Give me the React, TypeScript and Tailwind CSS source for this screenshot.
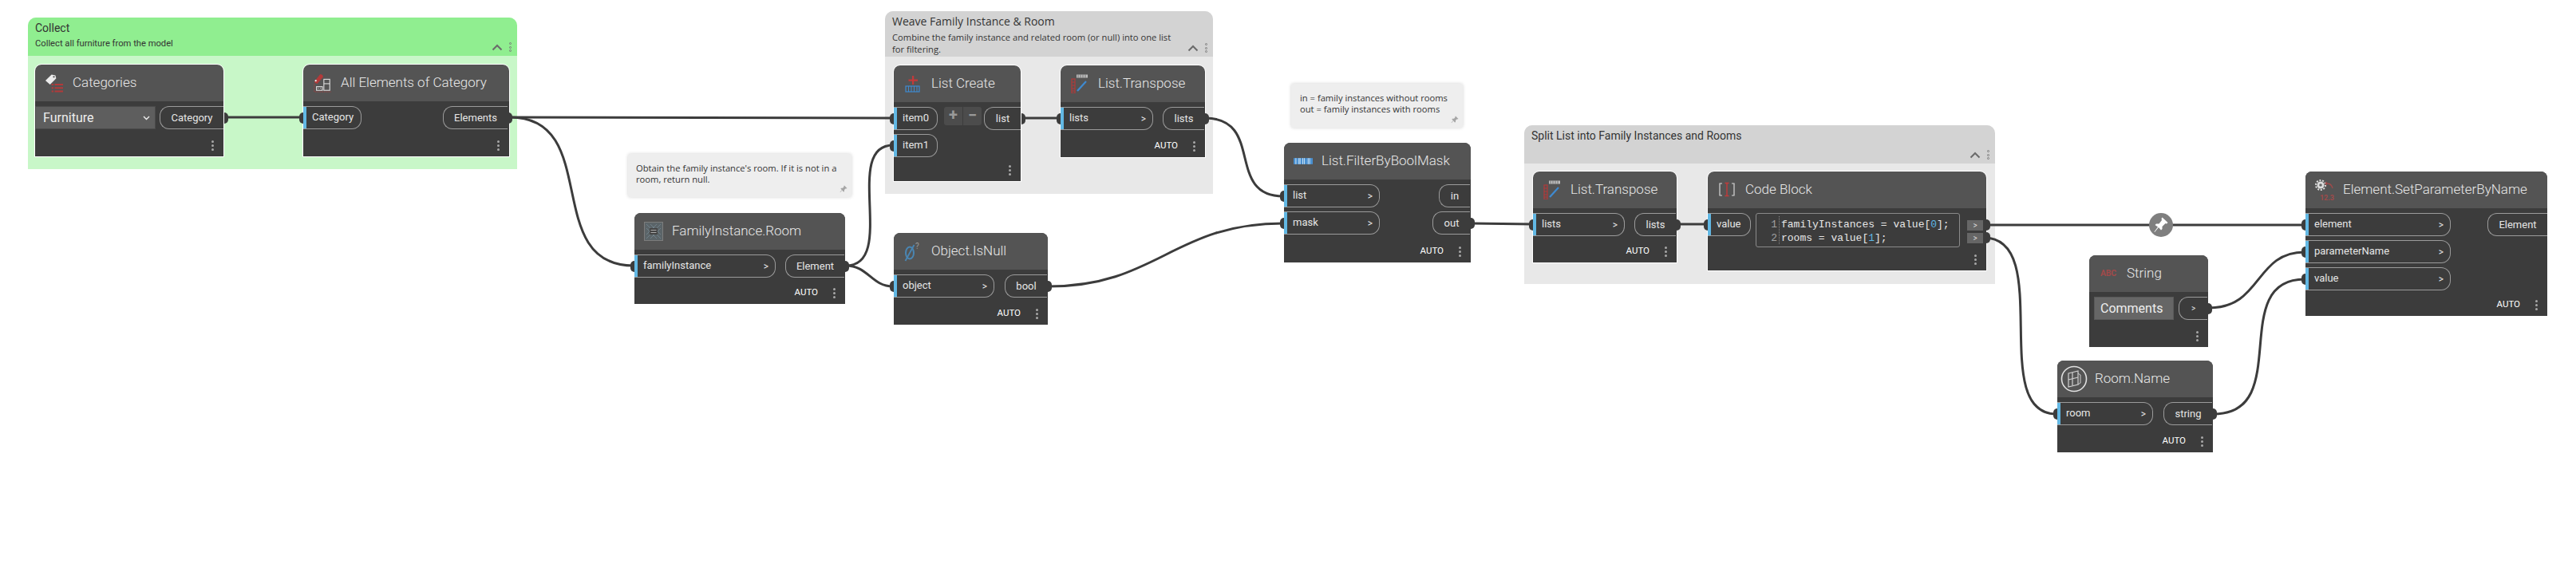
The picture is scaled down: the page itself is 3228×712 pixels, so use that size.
import React from 'react';

type Port = { label: string; cls: string; arrow?: boolean; wired?: boolean };

const Dots = () => (
  <div className="flex flex-col gap-[2px]">
    <span className="w-[3px] h-[3px] rounded-full bg-[#a8a8a8]" />
    <span className="w-[3px] h-[3px] rounded-full bg-[#a8a8a8]" />
    <span className="w-[3px] h-[3px] rounded-full bg-[#a8a8a8]" />
  </div>
);

const InPort = ({ label, cls, arrow = true, wired = true }: Port) => (
  <div className={`relative flex items-center justify-between h-[29px] border border-l-0 border-[#9b9b9b] rounded-r-[12px] pl-[10px] pr-[8px] shadow-[inset_4px_0_0_#62b8e4] ${cls}`}>
    {wired && <span className="absolute left-[-5px] top-[7px] w-[5px] h-[14px] rounded-l-full bg-[#3c3c3c]" />}
    <span className="pl-[1px] mt-[-2px]">{label}</span>
    {arrow && <span className="text-[12px]">&gt;</span>}
  </div>
);

const OutPort = ({ label, cls, wired = true }: Port) => (
  <div className={`relative flex items-center justify-center h-[29px] border border-r-0 border-[#9b9b9b] rounded-l-[12px] ${cls}`}>
    <span>{label}</span>
    {wired && <span className="absolute right-[-6px] top-[7px] w-[5px] h-[14px] rounded-r-full bg-[#3c3c3c]" />}
  </div>
);

interface NodeProps {
  box: string;
  title: string;
  icon: React.ReactNode;
  auto?: boolean;
  outline?: boolean;
  children: React.ReactNode;
}

const Node = ({ box, title, icon, auto, outline, children }: NodeProps) => (
  <div className={`absolute flex flex-col bg-[#3c3c3c] rounded-t-[8px] font-['Roboto',sans-serif] text-[13px] text-[#e6e6e6] ${outline ? 'outline outline-1 outline-white' : ''} ${box}`}>
    <div className="flex items-center h-[46px] shrink-0 bg-[#545454] rounded-t-[8px] pl-[12px]">
      <div className="flex items-center justify-center w-[24px] h-[26px] mr-[11px]">{icon}</div>
      <span className="text-[17px] font-light text-[#e8e8e8] whitespace-nowrap">{title}</span>
    </div>
    <div className="pt-[6px]">{children}</div>
    <div className="mt-auto flex items-center justify-end h-[28px] pr-[12px] gap-[19px]">
      {auto && <span className="text-[11.5px] text-white">AUTO</span>}
      <Dots />
    </div>
  </div>
);

const Group = ({ box, head, body, title, desc, titleCls }: { box: string; head: string; body: string; title: string; desc?: string; titleCls: string }) => (
  <div className={`absolute flex flex-col rounded-t-[10px] font-['Open_Sans',sans-serif] text-[#333] ${body} ${box}`}>
    <div className={`relative h-[48px] shrink-0 rounded-t-[10px] px-[9px] pt-[3px] ${head} ${titleCls}`}>
      <div className="text-[14px] leading-[20px] whitespace-nowrap">{title}</div>
      {desc && <div className="text-[11.2px] leading-[15px] mt-[2px] w-[360px]">{desc}</div>}
      <svg className="absolute right-[18px] bottom-[6px] w-[14px] h-[9px]" viewBox="0 0 14 9">
        <path d="M1.5 7.5 7 2l5.5 5.5" fill="none" stroke="#6b6b6b" strokeWidth="2" />
      </svg>
      <div className="absolute right-[7px] bottom-[5px] flex flex-col gap-[1.5px]">
        <span className="w-[3px] h-[3px] rounded-full border border-[#777]" />
        <span className="w-[3px] h-[3px] rounded-full border border-[#777]" />
        <span className="w-[3px] h-[3px] rounded-full border border-[#777]" />
      </div>
    </div>
  </div>
);

const Note = ({ box, lines }: { box: string; lines: string[] }) => (
  <div className={`absolute bg-[#eeeeee] rounded-[3px] shadow-[0_0_4px_rgba(0,0,0,0.18)] font-['Open_Sans',sans-serif] text-[11.2px] leading-[14px] text-[#333] whitespace-nowrap ${box}`}>
    {lines.map((l) => (
      <div key={l}>{l}</div>
    ))}
    <svg className="absolute right-[5px] bottom-[5px] w-[10px] h-[10px]" viewBox="0 0 10 10">
      <path d="M6 0.5 9.5 4 8.6 4.6 7.8 4.2 6 6 6 8 5 8.4 3.4 6.6 1 9 0.6 8.6 3 6.2 1.4 4.6 2 3.8 4 3.8 5.6 2 5.4 1.2Z" fill="#a5a5a5" />
    </svg>
  </div>
);

// icons
const IconCategories = () => (
  <svg width="25" height="24" viewBox="0 0 25 24">
    <path d="M1 9 9 1l5 1 1 4-8 8Z" fill="#ececec" />
    <circle cx="12" cy="4" r="1.2" fill="#555" />
    <path d="M13 13h11v2H13Zm0 4.500h11v2H13Zm0 4.500h11v2H13Z" fill="#b23a3a" />
    <path d="M9 13h2.500v2H9Zm0 4.500h2.500v2H9Zm0 4.500h2.500v2H9Z" fill="#b23a3a" />
  </svg>
);

const IconAllElements = () => (
  <svg width="26" height="26" viewBox="0 0 26 26">
    <path d="M2 11 10 1l3 1 1 3-8 9-3-1Z" fill="#b23a3a" />
    <circle cx="4" cy="10" r="1.2" fill="#eee" />
    <path d="M2 14v11h23" fill="none" stroke="#b23a3a" strokeWidth="0.8" strokeDasharray="2 1" />
    <rect x="15" y="8" width="8" height="15" fill="none" stroke="#ddd" strokeWidth="1.2" />
    <path d="M15 14h8" stroke="#ddd" strokeWidth="1.2" />
    <rect x="5" y="18" width="8" height="5" fill="none" stroke="#ddd" strokeWidth="1.2" />
    <path d="M7 20h1m2 0h1" stroke="#ddd" strokeWidth="1.2" />
  </svg>
);

const IconFamilyRoom = () => (
  <svg width="24" height="24" viewBox="0 0 24 24">
    <rect x="0.500" y="0.500" width="23" height="23" fill="#5b6468" stroke="#7c7c7c" />
    <path d="M3 3 21 21M21 3 3 21M3 8l13 13M8 3l13 13M21 8 8 21M16 3 3 16" stroke="#6f7f88" strokeWidth="1" />
    <rect x="7" y="8" width="10" height="8" fill="#444" />
    <path d="M8.500 10.500h7M8.500 13.500h7" stroke="#aaa" strokeWidth="1" />
  </svg>
);

const IconIsNull = () => (
  <svg width="24" height="26" viewBox="0 0 24 26">
    <ellipse cx="8" cy="15" rx="5" ry="7.500" fill="none" stroke="#4a86b3" strokeWidth="2" />
    <path d="M2.500 25 13.500 5" stroke="#4a86b3" strokeWidth="1.800" />
    <text x="15" y="10" fontSize="10" fill="#9b9b9b" fontFamily="Roboto, sans-serif">?</text>
  </svg>
);

const IconListCreate = () => (
  <svg width="20" height="22" viewBox="0 0 20 22">
    <path d="M9 1h2.200v4.500H16v2.200h-4.800V12H9V7.700H4.500V5.500H9Z" fill="#c23a3a" />
    <rect x="1" y="14" width="17" height="7" fill="none" stroke="#3f8ad0" strokeWidth="1.200" />
    <path d="M4.500 14v7M8 14v7M11.500 14v7M15 14v7" stroke="#3f8ad0" strokeWidth="1" />
  </svg>
);

const IconTranspose = () => (
  <svg width="22" height="24" viewBox="0 0 22 24">
    <rect x="7" y="0.500" width="14" height="4" fill="#bdbdbd" />
    <path d="M9 0.500v4M12 0.500v4M15 0.500v4M18 0.500v4" stroke="#666" strokeWidth="0.800" />
    <rect x="1" y="6" width="4" height="18" fill="none" stroke="#b33a3a" strokeWidth="1.200" />
    <path d="M1 10h4M1 14h4M1 18h4M1 21h4" stroke="#b33a3a" strokeWidth="1" />
    <path d="M8 21 19 9" stroke="#3f8ad0" strokeWidth="2.200" />
  </svg>
);

const IconFilter = () => (
  <svg width="25" height="8" viewBox="0 0 25 8">
    <rect x="0" y="0" width="25" height="8" fill="#4a90d0" />
    <path d="M3 0v8M7 0v8M8.500 0v8M12 0v8M14 0v8M19 0v8M21 0v8" stroke="#cfe4f5" strokeWidth="1" />
  </svg>
);

const IconCode = () => (
  <svg width="22" height="20" viewBox="0 0 22 20">
    <path d="M5 2H2v15h3M17 2h3v15h-3" fill="none" stroke="#d8d8d8" strokeWidth="1.200" />
    <path d="M8.500 1.500h5M8.500 17.500h5M11 1.500v16" fill="none" stroke="#c23a3a" strokeWidth="1.400" />
  </svg>
);

const IconString = () => (
  <span className="text-[10.5px] font-bold text-[#a04a4a] tracking-[-0.2px]">ABC</span>
);

const IconRoom = () => (
  <svg width="34" height="34" viewBox="0 0 34 34" className="ml-[-6px] shrink-0">
    <circle cx="17" cy="17" r="15.500" fill="none" stroke="#e0e0e0" strokeWidth="1.600" />
    <path d="M10 10 22 7v17l-12 3Zm0 8 12-3M15 9v16" fill="none" stroke="#d0d0d0" strokeWidth="1.200" />
    <path d="M22 10l3 2v10l-3 2" fill="none" stroke="#d0d0d0" strokeWidth="1" />
  </svg>
);

const IconSetParam = () => (
  <div className="relative w-[24px] h-[26px]">
    <svg className="absolute left-0 top-0" width="24" height="18" viewBox="0 0 24 18">
      <circle cx="7" cy="7" r="4.500" fill="#ddd" />
      <circle cx="7" cy="7" r="6" fill="none" stroke="#ddd" strokeWidth="2" strokeDasharray="2 1.700" />
      <circle cx="7" cy="7" r="1.800" fill="#666" />
      <path d="M15 5c4 0 6 2 7 6" fill="none" stroke="#a04a4a" strokeWidth="1.300" />
      <path d="M15 2.500v5l-3-2.500Z" fill="#a04a4a" />
    </svg>
    <span className="absolute right-0 bottom-[-2px] text-[9px] leading-[10px] text-[#a04a4a] font-bold">12.3</span>
  </div>
);

const Wires = () => (
  <svg className="absolute left-0 top-0" width="3228" height="712" fill="none" stroke="#3c3c3c" strokeWidth="3">
    <path d="M281 147H379" />
    <path d="M639 147C860 147 900 148 1119 148" />
    <path d="M639 147C755 147 678 333 794 333" />
    <path d="M1060 333C1125 333 1055 182 1119 182" />
    <path d="M1060 333C1088 333 1092 359 1119 359" />
    <path d="M1280 148H1328" />
    <path d="M1510 148C1585 148 1535 246 1608 246" />
    <path d="M1314 359C1450 359 1470 280 1608 280" />
    <path d="M1844 280C1880 280 1885 281 1920 281" />
    <path d="M2102 281H2139" />
    <path d="M2486 282C2600 282 2780 282 2888 282" />
    <path d="M2486 298C2575 298 2490 519 2577 519" />
    <path d="M2768 386C2835 386 2825 316 2888 316" />
    <path d="M2774 519C2875 519 2790 350 2888 350" />
  </svg>
);

export default function App() {
  return (
    <div className="relative w-[3228px] h-[712px] bg-white overflow-hidden">
      <Group box="left-[35px] top-[22px] w-[613px] h-[190px]" head="bg-[#90ee90]" body="bg-[#c8f7c8]" titleCls="font-['Roboto',sans-serif]" title="Collect" desc="Collect all furniture from the model" />
      <Group box="left-[1109px] top-[14px] w-[411px] h-[229px]" head="bg-[#d3d3d3]" body="bg-[#e8e8e8]" titleCls="!h-[57px]" title="Weave Family Instance & Room" desc="Combine the family instance and related room (or null) into one list for filtering." />
      <Group box="left-[1910px] top-[157px] w-[590px] h-[199px]" head="bg-[#d3d3d3]" body="bg-[#e8e8e8]" titleCls="font-['Roboto',sans-serif]" title="Split List into Family Instances and Rooms" />

      <Wires />

      <Note box="left-[787px] top-[193px] w-[280px] h-[54px] pl-[10px] pt-[11px]" lines={["Obtain the family instance's room. If it is not in a", 'room, return null.']} />
      <Note box="left-[1618px] top-[105px] w-[215px] h-[55px] pl-[11px] pt-[11px]" lines={['in = family instances without rooms', 'out = family instances with rooms']} />

      <Node box="left-[44px] top-[81px] w-[236px] h-[115px]" outline title="Categories" icon={<IconCategories />}>
        <div className="flex items-center">
          <div className="flex items-center justify-between w-[151px] h-[29px] bg-[#5e5e5e] border border-[#4a4a4a] pl-[9px] pr-[6px] text-[16px] text-[#eee]">
            <span>Furniture</span>
            <svg className="w-[9px] h-[6px]" viewBox="0 0 9 6">
              <path d="M1 1l3.500 3.500L8 1" fill="none" stroke="#eee" strokeWidth="1.400" />
            </svg>
          </div>
          <OutPort label="Category" cls="ml-[5px] w-[80px]" />
        </div>
      </Node>

      <Node box="left-[380px] top-[81px] w-[258px] h-[115px]" outline title="All Elements of Category" icon={<IconAllElements />}>
        <div className="flex justify-between">
          <InPort label="Category" arrow={false} cls="w-[73px]" />
          <OutPort label="Elements" cls="w-[81px] mr-[2px]" />
        </div>
      </Node>

      <Node box="left-[795px] top-[267px] w-[264px] h-[114px]" auto title="FamilyInstance.Room" icon={<IconFamilyRoom />}>
        <div className="flex justify-between">
          <InPort label="familyInstance" cls="w-[177px]" />
          <OutPort label="Element" cls="w-[74px] mr-[1px]" />
        </div>
      </Node>

      <Node box="left-[1120px] top-[292px] w-[193px] h-[115px]" auto title="Object.IsNull" icon={<IconIsNull />}>
        <div className="flex justify-between">
          <InPort label="object" cls="w-[126px]" />
          <OutPort label="bool" cls="w-[53px] mr-[1px]" />
        </div>
      </Node>

      <Node box="left-[1120px] top-[82px] w-[159px] h-[145px]" outline title="List Create" icon={<IconListCreate />}>
        <div className="flex justify-between">
          <div className="flex flex-col gap-[5px]">
            <InPort label="item0" arrow={false} cls="w-[55px]" />
            <InPort label="item1" arrow={false} cls="w-[55px]" />
          </div>
          <div className="flex h-[23px] w-[47px] ml-[5px] bg-[#4c4c4c] rounded-[3px] text-[#999] text-[20px] font-bold leading-[21px]">
            <span className="flex-1 text-center border-r border-[#3c3c3c]">+</span>
            <span className="flex-1 text-center">−</span>
          </div>
          <OutPort label="list" cls="w-[46px]" />
        </div>
      </Node>

      <Node box="left-[1329px] top-[82px] w-[181px] h-[115px]" outline auto title="List.Transpose" icon={<IconTranspose />}>
        <div className="flex justify-between">
          <InPort label="lists" cls="w-[116px]" />
          <OutPort label="lists" cls="w-[52px] mr-[1px]" />
        </div>
      </Node>

      <Node box="left-[1609px] top-[179px] w-[234px] h-[150px]" auto title="List.FilterByBoolMask" icon={<IconFilter />}>
        <div className="flex justify-between">
          <div className="flex flex-col gap-[5px]">
            <InPort label="list" cls="w-[120px]" />
            <InPort label="mask" cls="w-[120px]" />
          </div>
          <div className="flex flex-col items-end gap-[5px] mr-[1px]">
            <OutPort label="in" wired={false} cls="w-[39px]" />
            <OutPort label="out" cls="w-[47px]" />
          </div>
        </div>
      </Node>

      <Node box="left-[1921px] top-[215px] w-[180px] h-[114px]" outline auto title="List.Transpose" icon={<IconTranspose />}>
        <div className="flex justify-between">
          <InPort label="lists" cls="w-[115px]" />
          <OutPort label="lists" cls="w-[52px] mr-[1px]" />
        </div>
      </Node>

      <Node box="left-[2140px] top-[215px] w-[349px] h-[124px]" outline title="Code Block" icon={<IconCode />}>
        <div className="flex items-start">
          <InPort label="value" arrow={false} cls="w-[54px]" />
          <div className="relative ml-[6px] w-[256px] h-[43px] border border-[#8a8a8a] rounded-[3px] font-['Liberation_Mono',monospace] text-[13px] leading-[17px] pt-[5px]">
            <div className="absolute left-[28px] top-[3px] bottom-[3px] border-l border-dotted border-[#888]" />
            <div className="flex whitespace-pre">
              <span className="w-[26px] text-right text-[#a0a0a0]">1</span>
              <span className="ml-[5px]">familyInstances = value[<span className="text-[#5cb8e6]">0</span>];</span>
            </div>
            <div className="flex whitespace-pre">
              <span className="w-[26px] text-right text-[#a0a0a0]">2</span>
              <span className="ml-[5px]">rooms = value[<span className="text-[#5cb8e6]">1</span>];</span>
            </div>
          </div>
          <div className="relative ml-[9px] mt-[9px] flex flex-col gap-[3px]">
            <div className="relative w-[20px] h-[13px] bg-[#666] text-[10px] leading-[13px] text-center text-[#ddd]">
              &gt;
              <span className="absolute right-[-9px] top-[-1px] w-[5px] h-[14px] rounded-r-full bg-[#3c3c3c]" />
            </div>
            <div className="relative w-[20px] h-[13px] bg-[#666] text-[10px] leading-[13px] text-center text-[#ddd]">
              &gt;
              <span className="absolute right-[-9px] top-[-1px] w-[5px] h-[14px] rounded-r-full bg-[#3c3c3c]" />
            </div>
          </div>
        </div>
      </Node>

      <div className="absolute left-[2693px] top-[267px] flex items-center justify-center w-[30px] h-[30px] rounded-full bg-[#7f7f7f]">
        <svg width="18" height="20" viewBox="0 0 18 20">
          <path d="M10.500 0.500 17.500 7 16 8.500 14.500 8 10.500 12 10.500 15 9 16.500 6 13 1 19 0.500 18.500 5 12.500 1.500 10 3 8.500 6.500 8.500 10 4 9.500 2Z" fill="#fff" />
        </svg>
      </div>

      <Node box="left-[2618px] top-[320px] w-[149px] h-[115px]" title="String" icon={<IconString />}>
        <div className="flex items-center">
          <div className="flex items-center w-[100px] h-[29px] ml-[6px] bg-[#666] border border-[#5a5a5a] pl-[7px] text-[16px] text-[#eee]">
            Comments
          </div>
          <OutPort label=">" cls="ml-[6px] w-[36px] !text-[10px]" />
        </div>
      </Node>

      <Node box="left-[2578px] top-[452px] w-[195px] h-[115px]" auto title="Room.Name" icon={<IconRoom />}>
        <div className="flex justify-between">
          <InPort label="room" cls="w-[120px]" />
          <OutPort label="string" cls="w-[61px] mr-[1px]" />
        </div>
      </Node>

      <Node box="left-[2889px] top-[215px] w-[303px] h-[181px]" auto title="Element.SetParameterByName" icon={<IconSetParam />}>
        <div className="flex justify-between">
          <div className="flex flex-col gap-[5px]">
            <InPort label="element" cls="w-[182px]" />
            <InPort label="parameterName" cls="w-[182px]" />
            <InPort label="value" cls="w-[182px]" />
          </div>
          <OutPort label="Element" wired={false} cls="w-[75px]" />
        </div>
      </Node>
    </div>
  );
}
